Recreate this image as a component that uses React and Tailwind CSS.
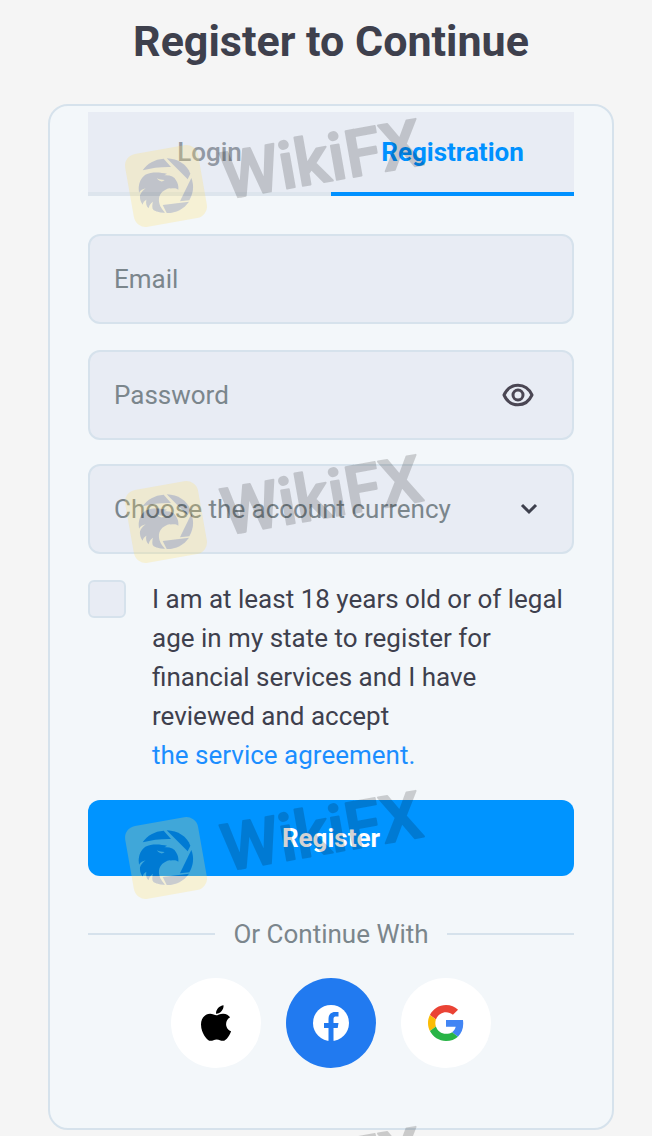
import { useState } from 'react';

const fieldBox = 'h-[90px] w-full rounded-xl border-2 border-[#d6e2ec] bg-[#e8ecf4] pl-6 text-[26px] outline-none';

// eagle inside the shutter ring
function Eagle() {
  return (
    <g transform="translate(30 84)" fill="#000000">
      <path d="M68 97 C82 76 104 64 131 62 L153 87 Q108 86 68 97 Z" />
      <path d="M140 61 C174 62 201 80 211 107 L203 124 Z" />
      <path d="M214 120 C223 143 220 166 208 187 L180 190 Z" />
      <path d="M128 201 L207 191 C191 214 166 226 140 225 Z" />
      <path
        fillRule="evenodd"
        d="M56 151 C57 132 64 119 76 110 C96 100 122 103 141 107 L133 112 C151 111 163 116 168 127 C174 136 176 145 175 155 C166 148 158 152 148 151 C132 155 119 166 117 181 C115 199 124 212 135 224 C121 225 108 221 98 213 C96 204 97 198 99 191 C90 197 87 204 86 211 C79 204 77 197 79 185 C73 188 69 193 68 200 C61 191 59 181 60 172 C63 163 69 157 77 151 C68 153 61 157 57 164 Z M110 121 C118 131 127 133 134 126 C126 126 118 125 110 121 Z"
      />
      <path d="M100 216 L101 205 L112 221 Z" />
    </g>
  );
}

function Watermark({ id }) {
  return (
    <svg viewBox="0 0 1110 390" className="h-[130px] w-[370px] shrink-0 overflow-visible" aria-hidden="true">
      <mask id={`cutout-${id}`} maskUnits="userSpaceOnUse" x="0" y="0" width="330" height="390">
        <rect width="330" height="390" fill="#ffffff" />
        <Eagle />
      </mask>
      <g mask={`url(#cutout-${id})`}>
        <rect x="57" y="117" width="222" height="222" rx="36" fill="#ffe066" opacity="0.25" transform="rotate(-10 168 228)" />
      </g>
      <g opacity="0.17">
        <Eagle />
      </g>
      <text
        x="348"
        y="268"
        transform="rotate(-10 348 268)"
        fill="#000000"
        stroke="#000000"
        strokeWidth="6"
        strokeLinejoin="round"
        opacity="0.17"
        className="font-['Roboto',sans-serif] text-[196px] font-medium"
      >
        WikiFX
      </text>
    </svg>
  );
}

function EyeIcon() {
  return (
    <svg viewBox="0 0 32 24" className="h-6 w-8" fill="none" stroke="#4a4653" strokeWidth="3" aria-hidden="true">
      <path d="M2 12 C8 -1 24 -1 30 12 C24 25 8 25 2 12 Z" strokeLinejoin="round" />
      <circle cx="16" cy="12" r="5" />
    </svg>
  );
}

function AppleIcon() {
  return (
    <svg viewBox="4 32 376 448" className="h-9 w-[30px]" fill="#000000" aria-hidden="true">
      <path d="M318.7 268.7c-.2-36.7 16.4-64.4 50-84.8-18.8-26.9-47.2-41.7-84.7-44.6-35.5-2.8-74.3 20.7-88.5 20.7-15 0-49.4-19.7-76.4-19.7C63.3 141.2 4 184.8 4 273.5q0 39.3 14.4 81.2c12.8 36.7 59 126.7 107.2 125.2 25.2-.6 43-17.9 75.8-17.9 31.8 0 48.3 17.9 76.4 17.9 48.6-.7 90.4-82.5 102.6-119.3-65.2-30.7-61.7-90-61.7-91.9zm-56.6-164.2c27.3-32.4 24.8-61.9 24-72.5-24.1 1.4-52 16.4-67.9 34.9-17.5 19.8-27.8 44.3-25.6 71.9 26.1 2 49.9-11.4 69.5-34.3z" />
    </svg>
  );
}

function FacebookIcon() {
  return (
    <svg viewBox="0 0 36 36" className="size-9" aria-hidden="true">
      <circle cx="18" cy="18" r="18" fill="#ffffff" />
      <path d="M15.5 36 V23 H11 V18 H15.5 V14 C15.5 9.5 18 7 22 7 H25.5 V11.5 H23 C21 11.5 20.5 12.5 20.5 14 V18 H25.5 L24.7 23 H20.5 V36 Z" fill="#217af0" />
    </svg>
  );
}

function GoogleIcon() {
  return (
    <svg viewBox="0 0 48 48" className="size-9" aria-hidden="true">
      <path fill="#ea4335" d="M24 9.5c3.54 0 6.71 1.22 9.21 3.6l6.85-6.85C35.9 2.38 30.47 0 24 0 14.62 0 6.51 5.38 2.56 13.22l7.98 6.19C12.43 13.72 17.74 9.5 24 9.5z" />
      <path fill="#4285f4" d="M46.98 24.55c0-1.57-.15-3.09-.38-4.55H24v9.02h12.94c-.58 2.96-2.26 5.48-4.78 7.18l7.73 6c4.51-4.18 7.09-10.36 7.09-17.65z" />
      <path fill="#fbbc05" d="M10.53 28.59c-.48-1.45-.76-2.99-.76-4.59s.27-3.14.76-4.59l-7.98-6.19C.92 16.46 0 20.12 0 24c0 3.88.92 7.54 2.56 10.78l7.97-6.19z" />
      <path fill="#28b446" d="M24 48c6.48 0 11.93-2.13 15.89-5.81l-7.73-6c-2.15 1.45-4.92 2.3-8.16 2.3-6.26 0-11.57-4.22-13.47-9.91l-7.98 6.19C6.51 42.62 14.62 48 24 48z" />
    </svg>
  );
}

export default function App() {
  const [showPassword, setShowPassword] = useState(false);

  return (
    <div className="relative min-h-screen overflow-hidden bg-[#f5f5f5] pl-12 pr-[38px] pb-1.5 font-['Roboto',sans-serif] text-[#3e404d]">
      <h1 className="pt-4 text-center text-[43px] leading-[50px] font-bold">Register to Continue</h1>

      <main className="mt-[38px] rounded-[20px] border-2 border-[#d6e2ec] bg-[#f3f7fa] px-[38px] pt-1.5 pb-[60px]">
        <div role="tablist" className="flex h-21 bg-[#e8ecf4] text-[26px]">
          <button role="tab" aria-selected="false" className="flex-1 border-b-4 border-[#dde5ed] font-medium text-[#9299a3]">
            Login
          </button>
          <button role="tab" aria-selected="true" className="flex-1 border-b-4 border-[#0091ff] font-bold text-[#0091ff]">
            Registration
          </button>
        </div>

        <form onSubmit={e => e.preventDefault()} className="mt-[38px]">
          <input type="email" aria-label="Email" placeholder="Email" className={`${fieldBox} block pr-6 placeholder:text-[#7b868c]`} />

          <div className="relative mt-[26px]">
            <input
              type={showPassword ? 'text' : 'password'}
              aria-label="Password"
              placeholder="Password"
              className={`${fieldBox} block pr-24 placeholder:text-[#7b868c]`}
            />
            <button
              type="button"
              aria-label="Show password"
              onClick={() => setShowPassword(!showPassword)}
              className="absolute inset-y-0 right-10 flex items-center"
            >
              <EyeIcon />
            </button>
          </div>

          <div className="relative mt-6">
            <select aria-label="Account currency" defaultValue="" className={`${fieldBox} block appearance-none pr-16 text-[#7b868c]`}>
              <option value="" disabled>Choose the account currency</option>
              <option>USD</option>
              <option>EUR</option>
            </select>
            <svg viewBox="0 0 18 12" className="pointer-events-none absolute top-[39px] right-9 h-3 w-[18px]" fill="none" stroke="#3e404d" strokeWidth="3" aria-hidden="true">
              <path d="M2 2 L9 9 L16 2" />
            </svg>
          </div>

          <div className="mt-[26px] flex gap-[26px]">
            <input id="terms" type="checkbox" className="size-[38px] shrink-0 appearance-none rounded-md border-2 border-[#d6e2ec] bg-[#e8ecf4] checked:bg-[#0091ff]" />
            <p className="text-[26px] leading-[39px]">
              <label htmlFor="terms">I am at least 18 years old or of legal age in my state to register for financial services and I have reviewed and accept</label>
              <a href="#agreement" className="block text-[#1b8eff]">the service agreement.</a>
            </p>
          </div>

          <button type="submit" className="mt-[25px] h-19 w-full rounded-xl bg-[#0094ff] text-[26px] font-bold text-white">
            Register
          </button>
        </form>

        <div className="mt-10 flex items-center gap-[18px] text-[26px] leading-[36px] text-[#7b868c]">
          <span className="h-0.5 flex-1 bg-[#d6e2ec]"></span>
          Or Continue With
          <span className="h-0.5 flex-1 bg-[#d6e2ec]"></span>
        </div>

        <div className="mt-[26px] flex justify-center gap-[25px]">
          <button aria-label="Continue with Apple" className="flex size-[90px] items-center justify-center rounded-full bg-white">
            <AppleIcon />
          </button>
          <button aria-label="Continue with Facebook" className="flex size-[90px] items-center justify-center rounded-full bg-[#217af0]">
            <FacebookIcon />
          </button>
          <button aria-label="Continue with Google" className="flex size-[90px] items-center justify-center rounded-full bg-white">
            <GoogleIcon />
          </button>
        </div>
      </main>

      {/* Repeating brand mark over the whole page */}
      <div className="pointer-events-none absolute inset-0 flex flex-col gap-[206px] overflow-hidden pt-[110px] pl-[110px]">
        {[0, 1, 2, 3].map(i => <Watermark key={i} id={i} />)}
      </div>
    </div>
  );
}
